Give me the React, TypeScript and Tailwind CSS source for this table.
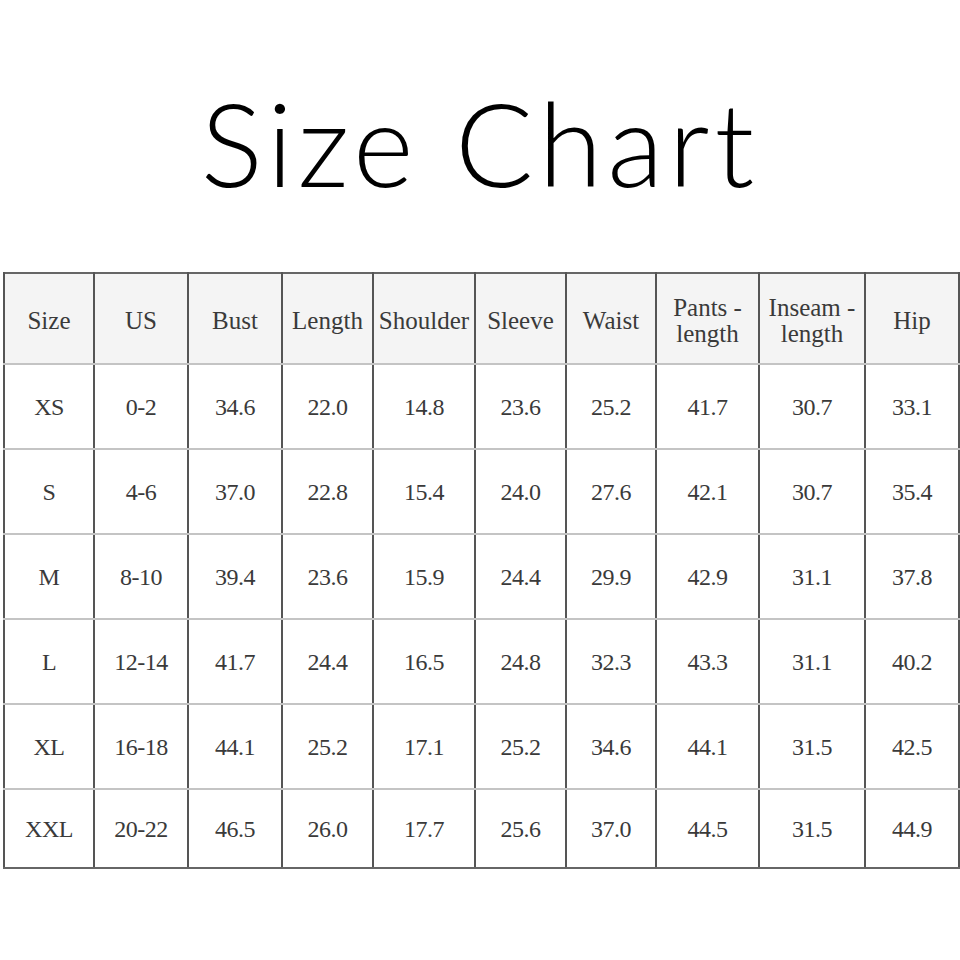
const headers: React.ReactNode[] = [
  "Size",
  "US",
  "Bust",
  "Length",
  "Shoulder",
  "Sleeve",
  "Waist",
  <>Pants -<br />length</>,
  <>Inseam -<br />length</>,
  "Hip",
];

const widths = [90, 94, 94, 91, 102, 91, 90, 103, 106, 94];

const rows = [
  ["XS", "0-2", "34.6", "22.0", "14.8", "23.6", "25.2", "41.7", "30.7", "33.1"],
  ["S", "4-6", "37.0", "22.8", "15.4", "24.0", "27.6", "42.1", "30.7", "35.4"],
  ["M", "8-10", "39.4", "23.6", "15.9", "24.4", "29.9", "42.9", "31.1", "37.8"],
  ["L", "12-14", "41.7", "24.4", "16.5", "24.8", "32.3", "43.3", "31.1", "40.2"],
  ["XL", "16-18", "44.1", "25.2", "17.1", "25.2", "34.6", "44.1", "31.5", "42.5"],
  ["XXL", "20-22", "46.5", "26.0", "17.7", "25.6", "37.0", "44.5", "31.5", "44.9"],
];

export default function App() {
  return (
    <div className="w-[960px] h-[960px] bg-white overflow-hidden">
      <h1 className="pt-[73px] h-[272px] text-center text-[116px] leading-[1.2] tracking-[5px] text-black [font-family:'Lato',sans-serif] font-light">
        Size Chart
      </h1>
      <table className="ml-[3px] w-[955px] table-fixed border-collapse border-2 border-[#666] text-[24px] text-[#3a3a3a] [font-family:'Liberation_Serif',serif]">
        <colgroup>
          {widths.map((w, i) => (
            <col key={i} style={{ width: w }} />
          ))}
        </colgroup>
        <thead>
          <tr className="h-[91px] bg-[#f4f4f4]">
            {headers.map((h, i) => (
              <th
                key={i}
                className="border-x-2 border-x-[#555] border-b-2 border-b-[#c4c4c4] pt-[5px] text-[25px] font-normal leading-[26px] text-center align-middle px-0"
              >
                {h}
              </th>
            ))}
          </tr>
        </thead>
        <tbody>
          {rows.map((r, ri) => {
            const last = ri === rows.length - 1;
            return (
              <tr key={ri} className={last ? "h-[79px]" : "h-[85px]"}>
                {r.map((c, ci) => (
                  <td
                    key={ci}
                    className={
                      "border-x-2 border-x-[#555] border-b-2 text-center align-middle tracking-[-0.5px] " +
                      (last ? "border-b-[#666]" : "border-b-[#c4c4c4]")
                    }
                  >
                    {c}
                  </td>
                ))}
              </tr>
            );
          })}
        </tbody>
      </table>
    </div>
  );
}
